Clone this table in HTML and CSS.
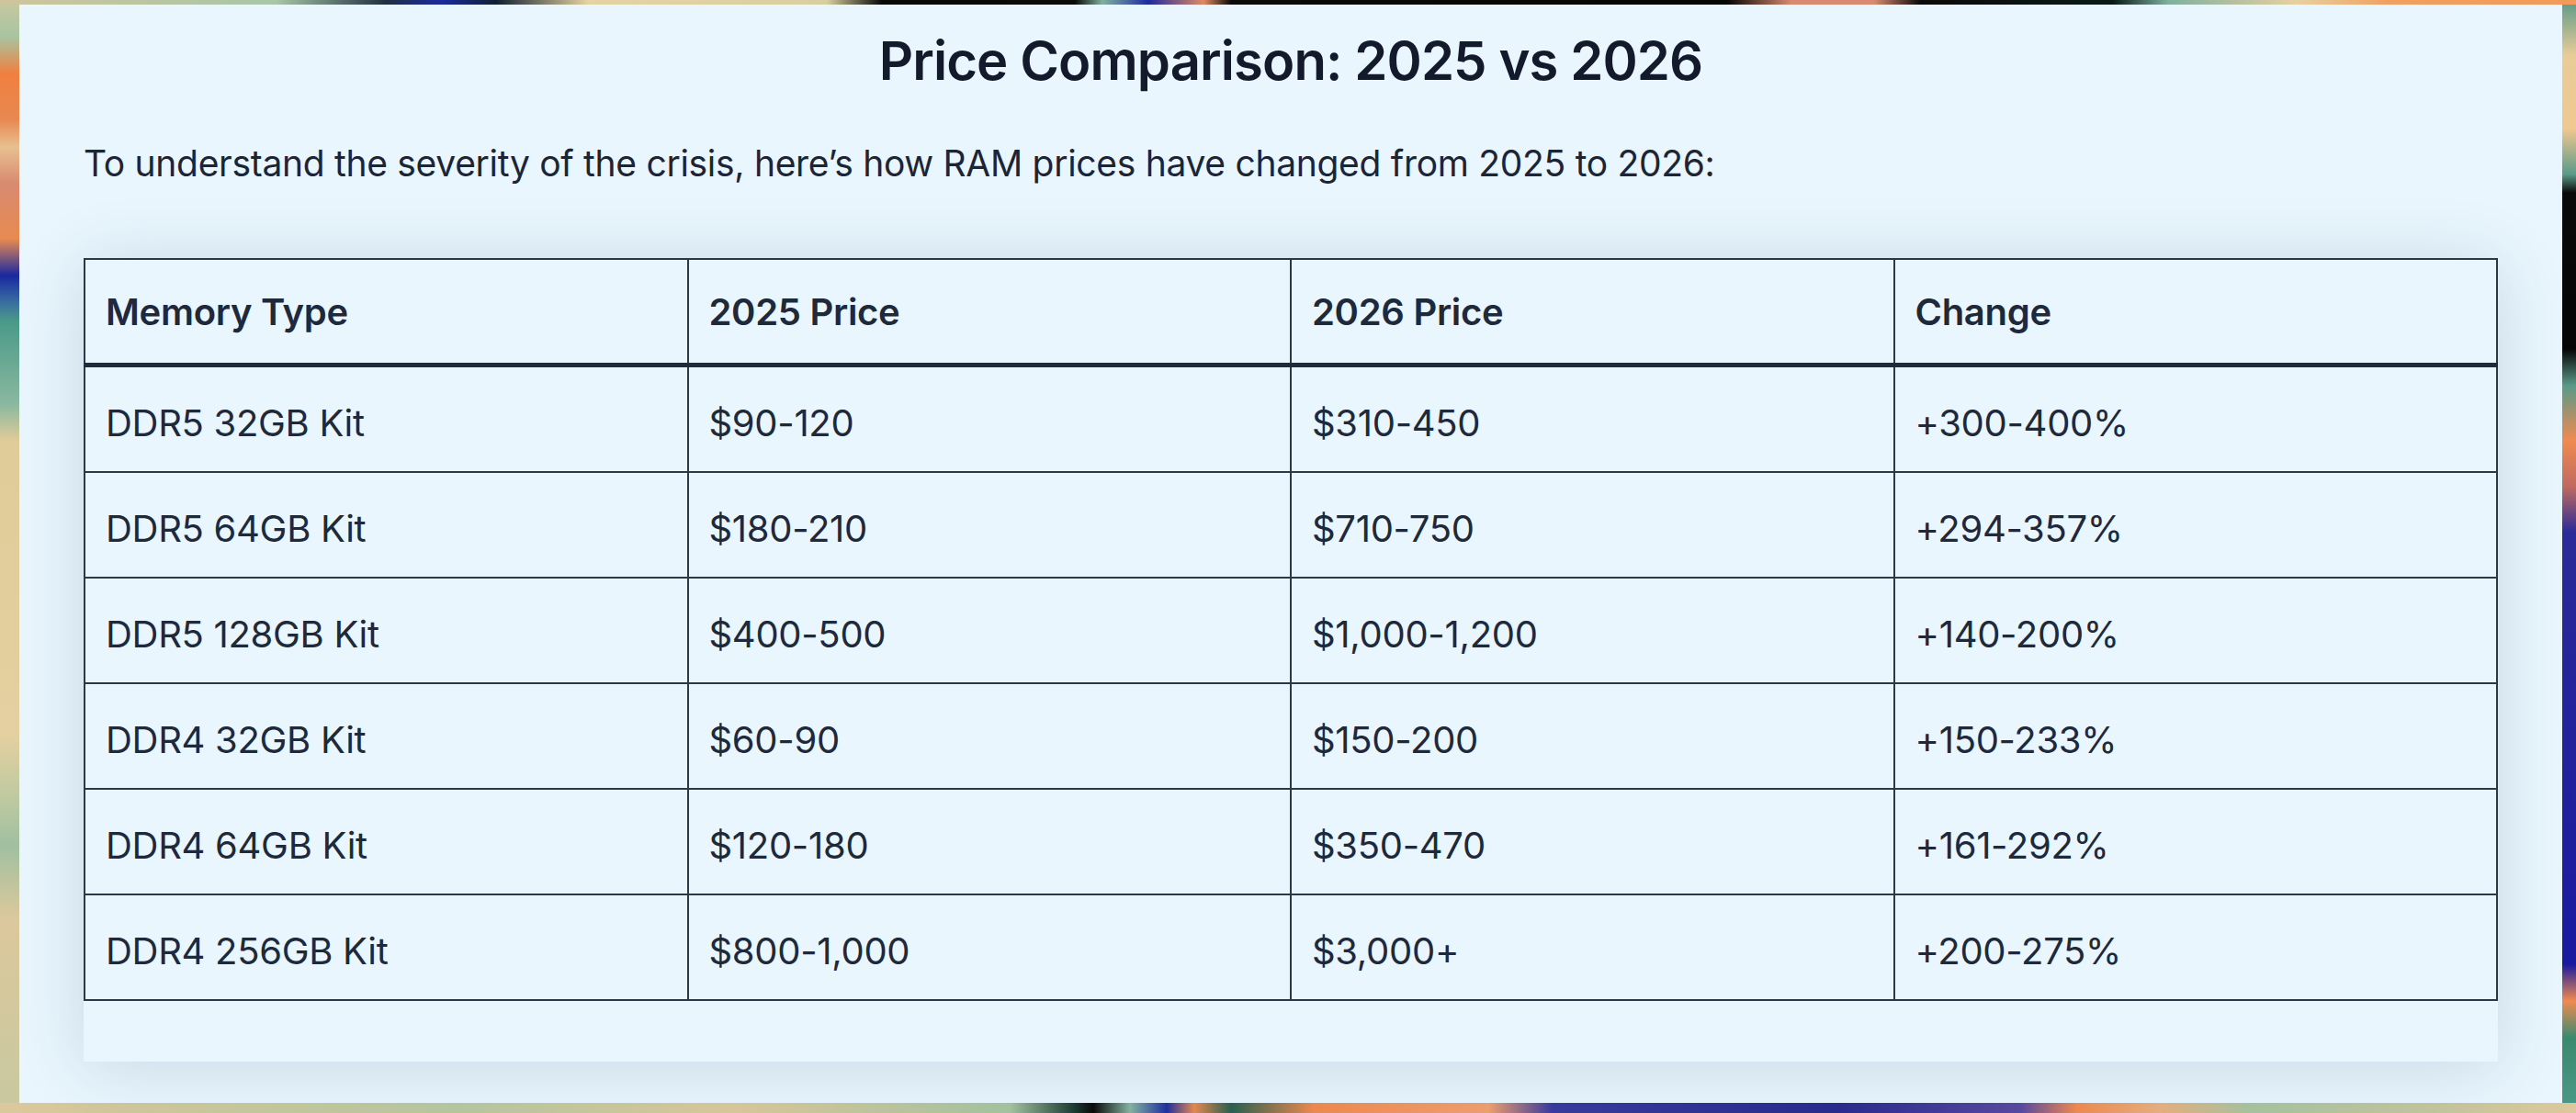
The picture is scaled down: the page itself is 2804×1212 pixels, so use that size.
FILE: index.html
```html
<!DOCTYPE html>
<html lang="en">
<head>
<meta charset="utf-8">
<title>Price Comparison: 2025 vs 2026</title>
<link rel="stylesheet" href="styles.css">
</head>
<body>
<main class="panel">
  <h2 class="title">Price Comparison: 2025 vs 2026</h2>
  <p class="intro">To understand the severity of the crisis, here’s how RAM prices have changed from 2025 to 2026:</p>
  <div class="table-wrap">
    <table class="prices">
      <thead>
        <tr><th>Memory Type</th><th>2025 Price</th><th>2026 Price</th><th>Change</th></tr>
      </thead>
      <tbody>
        <tr><td>DDR5 32GB Kit</td><td>$90-120</td><td>$310-450</td><td>+300-400%</td></tr>
        <tr><td>DDR5 64GB Kit</td><td>$180-210</td><td>$710-750</td><td>+294-357%</td></tr>
        <tr><td>DDR5 128GB Kit</td><td>$400-500</td><td>$1,000-1,200</td><td>+140-200%</td></tr>
        <tr><td>DDR4 32GB Kit</td><td>$60-90</td><td>$150-200</td><td>+150-233%</td></tr>
        <tr><td>DDR4 64GB Kit</td><td>$120-180</td><td>$350-470</td><td>+161-292%</td></tr>
        <tr><td>DDR4 256GB Kit</td><td>$800-1,000</td><td>$3,000+</td><td>+200-275%</td></tr>
      </tbody>
    </table>
  </div>
</main>
</body>
</html>
```
FILE: styles.css
```css
html, body {
  margin: 0;
  height: 1212px;
}
body {
  box-sizing: border-box;
  padding: 5px 15px 11px 21px;
  overflow: hidden;
  background:
    linear-gradient(to right, #cfc59c 0, #a8c6a8 300px, #203040 420px, #1c2aa0 480px, #102030 540px, #e6d3a2 640px, #d8cfa0 900px, #080808 960px, #0a0a0a 1170px, #7fb0a0 1200px, #1d2aa0 1250px, #e08a60 1310px, #0a0a0a 1340px, #050505 1880px, #d98a70 1950px, #d98a70 2040px, #0a0a0a 2090px, #0a1a18 2300px, #7fb0a0 2360px, #e8d0a0 2500px, #f0a060 2600px, #f29a5a 2804px) left top / 100% 5px no-repeat,
    linear-gradient(to right, #dcc89c 0, #b8c8a0 500px, #dcc89c 800px, #a5c4a0 1100px, #1a3a30 1170px, #0a0a0a 1190px, #86b4a0 1230px, #2030a0 1270px, #e88a50 1300px, #2a6050 1340px, #f08a50 1430px, #f0a070 1620px, #3a3aa0 1690px, #2a2a90 2000px, #5a4aa0 2200px, #f08a50 2260px, #e8b080 2350px, #a8c4a0 2450px, #dcc89c 2804px) left bottom / 100% 11px no-repeat,
    linear-gradient(to bottom, #c8c8a0 0, #a8c4a0 40px, #f08040 80px, #e88850 130px, #e8c090 160px, #d88a70 200px, #e88a50 260px, #1a28a0 300px, #3a70a0 330px, #4a9a88 350px, #8ab8a0 440px, #e0cc98 480px, #e4d0a0 800px, #b8c8a0 880px, #a0c0a0 920px, #dcc89c 1000px, #c8c8a0 1212px) left top / 21px 100% no-repeat,
    linear-gradient(to bottom, #5a9a88 0, #e8cc98 60px, #f0c890 140px, #5a9a88 190px, #0a0a0a 210px, #050505 380px, #5a9a88 420px, #f08a50 480px, #c06a60 530px, #2a2a98 580px, #1a1aa0 1050px, #f08a50 1090px, #3a8a70 1130px, #4a9a88 1212px) right top / 15px 100% no-repeat,
    #d8c8a0;
}

.panel {
  box-sizing: border-box;
  height: 1196px;
  background: #e9f6fe;
  padding: 0 70px 48px;
  font-family: "Inter", "Liberation Sans", sans-serif;
  color: #1c2536;
}

.title {
  margin: 0;
  padding-top: 23px;
  text-align: center;
  font-size: 58px;
  line-height: 76px;
  font-weight: 600;
  letter-spacing: -0.9px;
  color: #131a2c;
}

.intro {
  margin: 46px 0 0;
  font-size: 39px;
  line-height: 56px;
  font-weight: 400;
  letter-spacing: -0.3px;
  color: #1c2536;
}

.table-wrap {
  margin-top: 75px;
  padding-bottom: 66px;
  background: #e9f6fe;
  box-shadow: 0 6px 70px rgba(30, 60, 90, 0.16);
}

.prices {
  width: 100%;
  border-collapse: collapse;
  table-layout: fixed;
  border: 2px solid #2a3544;
}

.prices th,
.prices td {
  height: 106px;
  padding: 7px 22px 0;
  text-align: left;
  vertical-align: middle;
  border: 2px solid #2d3846;
  font-size: 40px;
  color: #1e293b;
  letter-spacing: -0.3px;
}

.prices th {
  font-weight: 600;
  height: 112px;
  padding-top: 0;
  border-bottom: 5px solid #1f2b3a;
}

.prices td {
  font-weight: 400;
}
```
